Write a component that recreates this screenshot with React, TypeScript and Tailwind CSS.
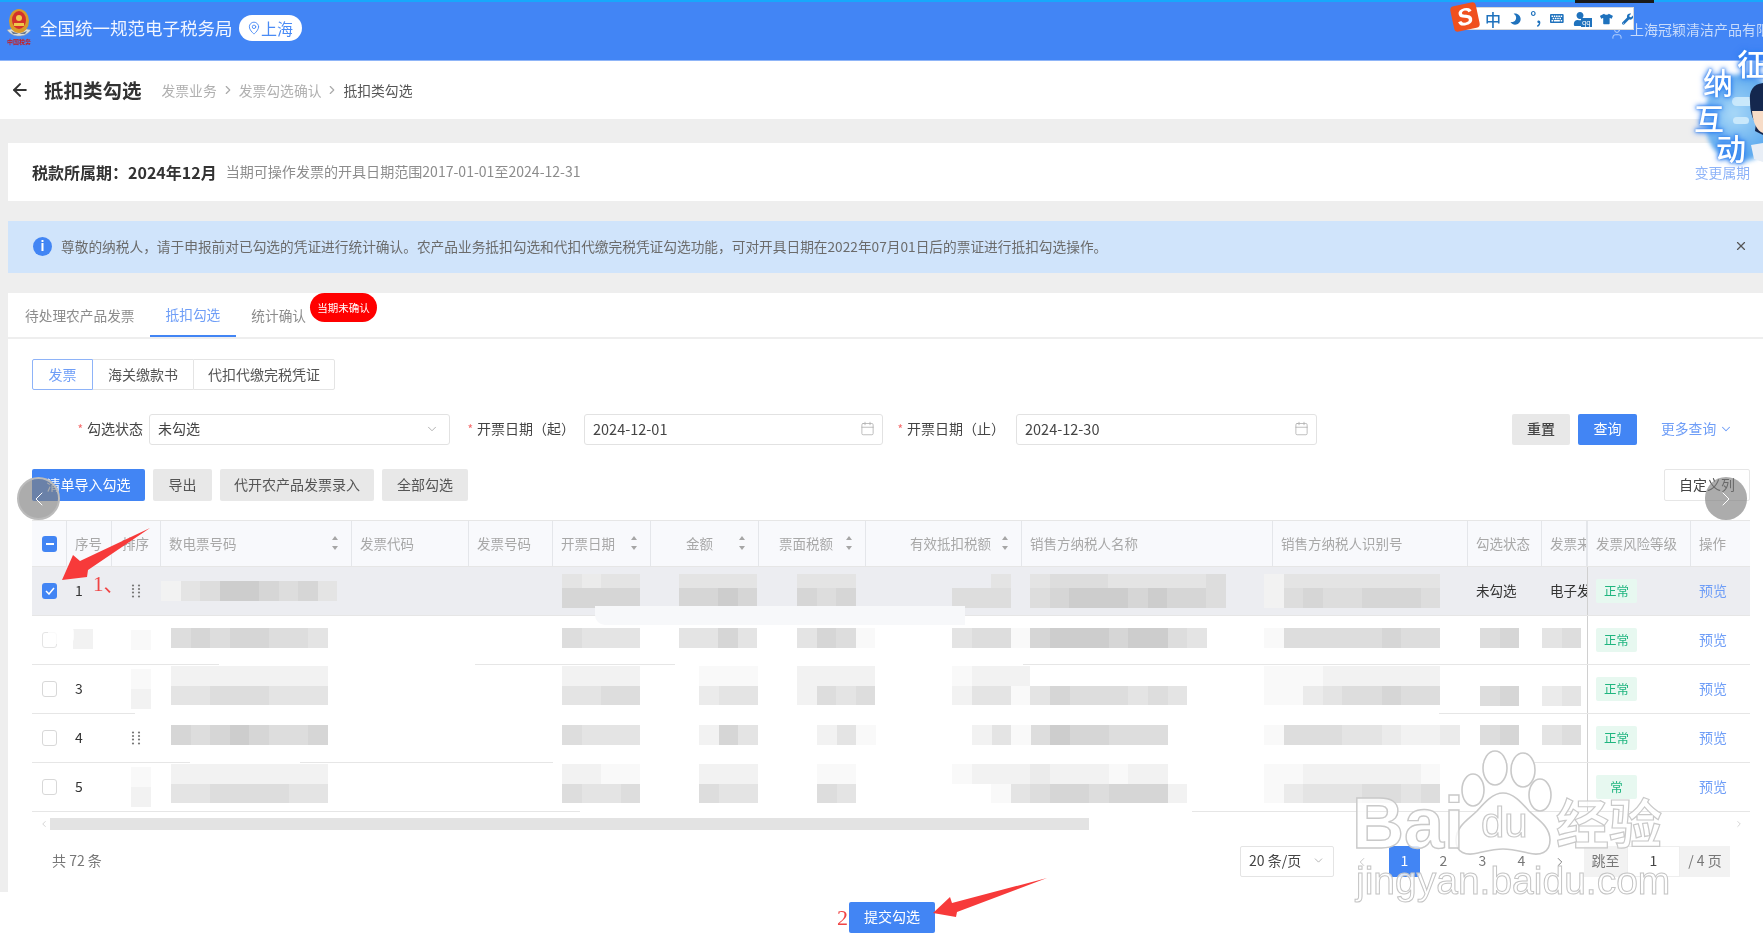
import React from "react";
import { ArrowLeft, ChevronRight, ChevronLeft, ChevronDown, Calendar, X, MapPin, User } from "lucide-react";
import { FaMoon, FaKeyboard, FaUser, FaTshirt, FaWrench } from "react-icons/fa";

const S: Record<string, string> = {
  ".": "bg-transparent",
  a: "bg-[#f9f9f9]",
  b: "bg-[#f2f2f2]",
  c: "bg-[#ebebeb]",
  d: "bg-[#e4e4e4]",
  e: "bg-[#dddddd]",
  f: "bg-[#d6d6d6]",
  g: "bg-[#cdcdcd]",
  h: "bg-[#c2c2c2]",
};

function Mosaic({ rows, cls, shortTop }: { rows: string[]; cls: string; shortTop?: boolean }) {
  return (
    <div className={"flex flex-col " + cls}>
      {rows.map((r, i) => (
        <div key={i} className={"flex " + (shortTop && i === 0 && rows.length > 1 ? "h-[14px]" : "h-[19.6px]")}>
          {r.split("").map((c, j) => (
            <div key={j} className={"w-[19.6px] h-full shrink-0 " + S[c]} />
          ))}
        </div>
      ))}
    </div>
  );
}

function Sort() {
  return (
    <svg width="8" height="16" viewBox="0 0 8 16" className="shrink-0">
      <path d="M4 1L7 5H1z" fill="#a6a6a6" />
      <path d="M4 15L7 11H1z" fill="#a6a6a6" />
    </svg>
  );
}

function Grip() {
  return (
    <svg width="10" height="15" viewBox="0 0 10 15">
      {[1.5, 5, 8.5, 12.5].map((y) => (
        <g key={y}>
          <circle cx="2" cy={y} r="1.1" fill="#777" />
          <circle cx="8" cy={y} r="1.1" fill="#777" />
        </g>
      ))}
    </svg>
  );
}

const COLS = "grid grid-cols-[35px_45px_49px_191px_117px_84px_98px_108px_107px_156px_251px_195px_74px_45px_104px_59px]";

function Head({ children, cls, sort, sortCls }: { children?: React.ReactNode; cls?: string; sort?: boolean; sortCls?: string }) {
  return (
    <div className={"flex items-center h-full pb-[1px] border-r border-[#e4e6ea] text-[13.5px] text-[#a8a8a8] " + (cls || "pl-2")}>
      <span className="whitespace-nowrap overflow-hidden">{children}</span>
      {sort && <span className={"flex " + (sortCls || "")}><Sort /></span>}
    </div>
  );
}

function Tag({ label = "正常" }: { label?: string }) {
  return (
    <div className="h-full flex items-center pl-2 border-l border-[#d0d0d0]">
      <span className="w-[41px] h-[24px] bg-[#e7f8f0] rounded-[2px] flex items-center justify-center text-[12.5px] text-[#1fb57f]">{label}</span>
    </div>
  );
}

function Box({ checked, faded }: { checked?: boolean; faded?: boolean }) {
  return (
    <div className="h-full flex items-center pl-[10px]">
      {checked ? (
        <span className="w-[15px] h-[16px] rounded-[3px] bg-[#4285f4] flex items-center justify-center">
          <svg width="10" height="8" viewBox="0 0 10 8"><path d="M1 4l3 3 5-6" fill="none" stroke="#fff" strokeWidth="1.5" /></svg>
        </span>
      ) : (
        <span className={"w-[15px] h-[16px] rounded-[3px] border " + (faded ? "border-[#e4e4e4] bg-white" : "border-[#d8d8d8] bg-white")} />
      )}
    </div>
  );
}

function Row({
  sel, checked, num, grip, seq, handleM, m1, m2, m3, m4, m5, m6, m7, m8, m9, tag, tagFaded,
}: {
  sel?: boolean; checked?: boolean; num?: string; grip?: boolean; seq?: React.ReactNode; handleM?: React.ReactNode;
  m1?: React.ReactNode; m2?: React.ReactNode; m3?: React.ReactNode; m4?: React.ReactNode; m5?: React.ReactNode;
  m6?: React.ReactNode; m7?: React.ReactNode; m8?: React.ReactNode; m9?: React.ReactNode; tag?: string; tagFaded?: boolean;
}) {
  return (
    <div className={COLS + " h-[49px] border-b border-[#e6e6e6] " + (sel ? "bg-[#ecedf1]" : "bg-white")}>
      <Box checked={checked} faded={tagFaded} />
      <div className="h-full flex items-center pb-[2px] pl-2 text-[14px] text-[#333] relative">
        {seq}
        {num}
      </div>
      <div className="h-full flex items-center pl-[19px]">
        {handleM}
        {grip && <Grip />}
      </div>
      <div>{m1}</div>
      <div />
      <div />
      <div>{m2}</div>
      <div>{m3}</div>
      <div>{m4}</div>
      <div>{m5}</div>
      <div>{m6}</div>
      <div>{m7}</div>
      <div>{m8}</div>
      <div className="overflow-hidden">{m9}</div>
      <Tag label={tag} />
      <div className="h-full flex items-center pb-[2px] pl-2 text-[14px] text-[#6f9ef7]">预览</div>
    </div>
  );
}

function Field({ label, cls }: { label: string; cls: string }) {
  return (
    <div className={"flex items-center justify-end pb-[2px] whitespace-nowrap text-[14px] text-[#444] " + cls}>
      <span className="text-[#f56c6c] mr-1 text-[12px]">*</span>
      {label}
    </div>
  );
}

function DateInput({ value, cls }: { value: string; cls: string }) {
  return (
    <div className={"h-[31px] pb-[2px] border border-[#e2e2e2] rounded-[3px] flex items-center justify-between pl-2 pr-[7px] text-[14.5px] text-[#444] " + cls}>
      {value}
      <Calendar size={15} strokeWidth={1.2} className="text-[#aaa]" />
    </div>
  );
}

function GrayBtn({ children, cls }: { children: React.ReactNode; cls: string }) {
  return <button className={"h-[32px] pb-[2px] bg-[#e8e8e8] rounded-[2px] text-[14px] text-[#555] flex items-center justify-center " + cls}>{children}</button>;
}

function Emblem() {
  return (
    <div className="flex flex-col items-center w-[26px] ml-[6px] mt-[6px] self-start">
      <svg width="26" height="30" viewBox="0 0 26 30">
        <path d="M1 22c4 5 8 6 12 6s8-1 12-6l-4-1H5z" fill="#d8dde2" stroke="#8f97a3" strokeWidth="0.6" />
        <ellipse cx="13" cy="13" rx="10" ry="12" fill="#d99a2b" />
        <ellipse cx="13" cy="12" rx="7" ry="9" fill="#d4302a" />
        <circle cx="13" cy="10" r="3" fill="#efc94c" />
        <rect x="8" y="15" width="10" height="3" fill="#efc94c" />
        <path d="M5 23l8 3 8-3-2 3h-12z" fill="#6b7a8f" />
      </svg>
      <span className="text-[6px] leading-[8px] font-bold text-[#c81e1e] whitespace-nowrap">中国税务</span>
    </div>
  );
}

const tabBase = "h-full flex items-center whitespace-nowrap text-[13.7px]";

export default function App() {
  return (
    <div className="relative w-[1763px] h-[939px] overflow-hidden bg-white [font-family:'Noto_Sans_CJK_SC','Noto_Sans',sans-serif] blur-[0.4px]">
      <div className="h-[2px] bg-[#17a8fb]" />
      {/* header */}
      <header className="h-[59px] pb-[6px] bg-[#4285f5] flex items-center border-b border-[#8fb5f8]">
        <Emblem />
        <span className="ml-2 text-[17.5px] text-[#f2f6ff] whitespace-nowrap">全国统一规范电子税务局</span>
        <span className="ml-[6px] w-[63px] h-[26px] bg-white rounded-full flex items-center justify-center text-[16px] text-[#4a8bf5]">
          <MapPin size={14} strokeWidth={1.6} />
          上海
        </span>
        <span className="ml-auto mt-[3px] flex items-center text-[14px] text-[#c8dbfb] whitespace-nowrap w-[153px] overflow-hidden">
          <User size={14} strokeWidth={1.5} className="shrink-0 mr-[6px] mt-[6px]" />
          上海冠颖清洁产品有限
        </span>
      </header>
      {/* breadcrumb */}
      <div className="h-[58px] flex items-center">
        <ArrowLeft size={20} strokeWidth={2.4} className="ml-[10px] text-[#333]" />
        <span className="ml-[14px] text-[19.5px] font-bold text-[#333] whitespace-nowrap">抵扣类勾选</span>
        <span className="ml-5 text-[13.8px] text-[#b0b0b0] whitespace-nowrap">发票业务</span>
        <ChevronRight size={14} className="mx-[4px] text-[#aaa]" />
        <span className="text-[13.8px] text-[#b0b0b0] whitespace-nowrap">发票勾选确认</span>
        <ChevronRight size={14} className="mx-[4px] text-[#aaa]" />
        <span className="text-[13.8px] text-[#555] whitespace-nowrap">抵扣类勾选</span>
      </div>
      {/* main */}
      <main className="h-[773px] bg-[#eeeeee] pl-2 pt-6">
        <section className="h-[58px] bg-white flex items-center pl-6 pr-[13px]">
          <span className="text-[16px] font-bold text-[#333] whitespace-nowrap">税款所属期：2024年12月</span>
          <span className="ml-[9px] text-[14.05px] text-[#8c8c8c] whitespace-nowrap">当期可操作发票的开具日期范围2017-01-01至2024-12-31</span>
          <span className="ml-auto text-[13.8px] text-[#8eb3f8] whitespace-nowrap">变更属期</span>
        </section>
        <section className="mt-5 h-[52px] pb-[2px] bg-[#d0e4fb] flex items-center pl-[25px] pr-[15px]">
          <span className="w-[19px] h-[19px] rounded-full bg-[#4285f4] flex items-center justify-center text-[13px] font-bold text-white shrink-0">i</span>
          <span className="ml-[9px] text-[13.7px] text-[#6b6b6b] whitespace-nowrap">尊敬的纳税人，请于申报前对已勾选的凭证进行统计确认。农产品业务抵扣勾选和代扣代缴完税凭证勾选功能，可对开具日期在2022年07月01日后的票证进行抵扣勾选操作。</span>
          <X size={14} strokeWidth={2} className="ml-auto text-[#555]" />
        </section>
        <section className="mt-5 h-[599px] bg-white">
          {/* tabs */}
          <div className="h-[46px] border-b-2 border-[#eeeeee] flex items-stretch">
            <span className={tabBase + " ml-[17px] text-[#8c8c8c]"}>待处理农产品发票</span>
            <span className={tabBase + " ml-[15px] px-4 text-[#6f9ef7] border-b-2 border-[#4285f4] h-[46px]"}>抵扣勾选</span>
            <span className={tabBase + " ml-[15px] text-[#8c8c8c]"}>统计确认</span>
            <span className="ml-1 h-[29px] w-[67px] rounded-full bg-[#ff0000] text-white text-[10.5px] flex items-center justify-center whitespace-nowrap">当期未确认</span>
          </div>
          {/* segmented */}
          <div className="mt-5 ml-6 h-[31px] flex text-[14px]">
            <span className="w-[61px] flex items-center justify-center border border-[#8eb3f8] rounded-l-[2px] text-[#6f9ef7]">发票</span>
            <span className="w-[100px] flex items-center justify-center border-y border-[#e4e4e4] text-[#555]">海关缴款书</span>
            <span className="w-[142px] flex items-center justify-center border border-[#e4e4e4] rounded-r-[2px] text-[#555]">代扣代缴完税凭证</span>
          </div>
          {/* filters */}
          <div className="mt-6 ml-6 h-[31px] flex items-stretch">
            <Field label="勾选状态" cls="w-[111px]" />
            <div className="ml-[6px] w-[301px] pb-[2px] border border-[#e2e2e2] rounded-[3px] flex items-center justify-between pl-2 pr-[10px] text-[14px] text-[#444]">
              未勾选
              <ChevronDown size={14} strokeWidth={1.3} className="text-[#999]" />
            </div>
            <Field label="开票日期（起）" cls="w-[125px]" />
            <div className="ml-[9px]"><DateInput value="2024-12-01" cls="w-[299px]" /></div>
            <Field label="开票日期（止）" cls="w-[122px]" />
            <div className="ml-[11px]"><DateInput value="2024-12-30" cls="w-[301px]" /></div>
            <button className="ml-[195px] w-[58px] pb-[2px] bg-[#e8e8e8] rounded-[2px] text-[14px] font-medium text-[#444]">重置</button>
            <button className="ml-2 w-[59px] pb-[2px] bg-[#4285f4] rounded-[2px] text-[14px] text-white">查询</button>
            <span className="ml-[24px] pb-[2px] flex items-center text-[13.8px] text-[#6f9ef7] whitespace-nowrap">
              更多查询
              <ChevronDown size={14} strokeWidth={1.8} className="ml-[3px]" />
            </span>
          </div>
          {/* actions */}
          <div className="mt-6 ml-6 h-[32px] flex items-stretch gap-2 w-[1718px]">
            <button className="w-[113px] pb-[2px] bg-[#4285f4] rounded-[2px] text-[14px] text-white">清单导入勾选</button>
            <GrayBtn cls="w-[59px]">导出</GrayBtn>
            <GrayBtn cls="w-[154px]">代开农产品发票录入</GrayBtn>
            <GrayBtn cls="w-[86px]">全部勾选</GrayBtn>
            <button className="ml-auto w-[86px] pb-[2px] border border-[#e6e6e6] rounded-[2px] text-[14px] text-[#444]">自定义列</button>
          </div>
          {/* table */}
          <div className="mt-[19px] ml-6 w-[1718px]">
            <div className={COLS + " h-[47px] bg-[#f8f9fc] border-y border-[#e6e6e6]"}>
              <div className="h-full flex items-center pl-[10px] border-r border-[#e4e6ea]">
                <span className="w-[15px] h-[16px] rounded-[3px] bg-[#4285f4] flex items-center justify-center">
                  <span className="w-[8px] h-[2px] bg-white" />
                </span>
              </div>
              <Head>序号</Head>
              <Head cls="pl-[10px]">排序</Head>
              <Head cls="pl-2 justify-between pr-3" sort>数电票号码</Head>
              <Head>发票代码</Head>
              <Head>发票号码</Head>
              <Head cls="pl-2 justify-between pr-3" sort>开票日期</Head>
              <Head cls="justify-end pr-3" sort sortCls="ml-[25px]">金额</Head>
              <Head cls="justify-end pr-3" sort sortCls="ml-[12px]">票面税额</Head>
              <Head cls="justify-end pr-3" sort sortCls="ml-[10px]">有效抵扣税额</Head>
              <Head>销售方纳税人名称</Head>
              <Head>销售方纳税人识别号</Head>
              <Head>勾选状态</Head>
              <Head>发票来源</Head>
              <Head cls="pl-2 border-l border-[#d0d0d0]">发票风险等级</Head>
              <Head cls="pl-2 border-r-0">操作</Head>
            </div>
            <Row
              sel checked num="1" grip
              m1={<Mosaic cls="mt-[14px]" rows={["bdeggfefd"]} />}
              m2={<Mosaic shortTop cls="ml-[9px] mt-[7px]" rows={["dcdd", "ffff"]} />}
              m3={<Mosaic shortTop cls="ml-[28px] mt-[7px]" rows={["dddd", "ffgf"]} />}
              m4={<Mosaic shortTop cls="ml-[38px] mt-[7px]" rows={["ddd", "fef"]} />}
              m5={<Mosaic shortTop cls="ml-[86px] mt-[7px]" rows={["..d", "eee"]} />}
              m6={<Mosaic shortTop cls="ml-[8px] mt-[7px]" rows={["deeeddddde", "efgggfgffe"]} />}
              m7={<Mosaic shortTop cls="ml-[-9px] mt-[7px]" rows={["bdddddddd", "befeefffe"]} />}
              m8={<div className="h-full flex items-center pb-[2px] pl-2 text-[13.5px] text-[#333]">未勾选</div>}
              m9={<div className="h-full flex items-center pb-[2px] pl-2 text-[13.5px] text-[#333] whitespace-nowrap">电子发票</div>}
            />
            <Row
              tagFaded tag="正常"
              seq={<Mosaic cls="ml-[-2px]" rows={["b"]} />}
              handleM={<Mosaic cls="" rows={["a"]} />}
              m1={<Mosaic cls="ml-[10px] mt-[12px]" rows={["efeffeed"]} />}
              m2={<Mosaic cls="ml-[9px] mt-[12px]" rows={["eddd"]} />}
              m3={<Mosaic cls="ml-[28px] mt-[12px]" rows={["ddfd"]} />}
              m4={<Mosaic cls="ml-[38px] mt-[12px]" rows={["dfea"]} />}
              m5={<Mosaic cls="ml-[86px] mt-[12px]" rows={["deeafgggfgged"]} />}
              m7={<Mosaic cls="ml-[-9px] mt-[12px]" rows={["aeeeeefee"]} />}
              m8={<Mosaic cls="ml-[12px] mt-[12px]" rows={["ef"]} />}
              m9={<Mosaic cls="mt-[12px]" rows={["de"]} />}
            />
            <Row
              num="3"
              handleM={<Mosaic rows={["a", "b"]} cls="" />}
              m1={<Mosaic cls="ml-[10px] mt-[1px]" rows={["bbbbbbbb", "ddeeeddd"]} />}
              m2={<Mosaic cls="ml-[9px] mt-[1px]" rows={["bbbb", "ddee"]} />}
              m3={<Mosaic cls="ml-[48px] mt-[1px]" rows={["aaa", "cdd"]} />}
              m4={<Mosaic cls="ml-[38px] mt-[1px]" rows={["bbbb", "bede"]} />}
              m5={<Mosaic cls="ml-[86px] mt-[1px]" rows={["abbb", "bddadfeeeded"]} />}
              m7={<Mosaic cls="ml-[-9px] mt-[1px]" rows={["aaabbbbbb", "aacdeefee"]} />}
              m8={<Mosaic cls="ml-[12px] mt-[21px]" rows={["ef"]} />}
              m9={<Mosaic cls="mt-[21px]" rows={["cd"]} />}
            />
            <Row
              num="4" grip
              m1={<Mosaic cls="ml-[10px] mt-[11px]" rows={["fefgfeef"]} />}
              m2={<Mosaic cls="ml-[9px] mt-[11px]" rows={["eddd"]} />}
              m3={<Mosaic cls="ml-[48px] mt-[11px]" rows={["bfd"]} />}
              m4={<Mosaic cls="ml-[58px] mt-[11px]" rows={["bda"]} />}
              m5={<Mosaic cls="ml-[106px] mt-[11px]" rows={["bdaegffeee"]} />}
              m7={<Mosaic cls="ml-[-9px] mt-[11px]" rows={["aeeeddcbbc"]} />}
              m8={<Mosaic cls="ml-[12px] mt-[11px]" rows={["ef"]} />}
              m9={<Mosaic cls="mt-[11px]" rows={["de"]} />}
            />
            <Row
              num="5" tag="常"
              handleM={<Mosaic rows={["a", "b"]} cls="" />}
              m1={<Mosaic cls="ml-[10px] mt-[1px]" rows={["bbbbbbbb", "ddeeeedd"]} />}
              m2={<Mosaic cls="ml-[9px] mt-[1px]" rows={["bbaa", "edde"]} />}
              m3={<Mosaic cls="ml-[48px] mt-[1px]" rows={["bbb", "edd"]} />}
              m4={<Mosaic cls="ml-[58px] mt-[1px]" rows={["aa", "ed"]} />}
              m5={<Mosaic cls="ml-[86px] mt-[1px]" rows={["abbbcbbbabb", "..adeffefffb"]} />}
              m7={<Mosaic cls="ml-[-9px] mt-[1px]" rows={["aabbbbbba", "acdddeede"]} />}
              m8={<Mosaic cls="ml-[12px] mt-[21px]" rows={[".."]} />}
            />
            {/* scrollbar */}
            <div className="h-[19px] flex items-center pl-[7px] pr-[6px] text-[#ccc]">
              <ChevronLeft size={10} className="mt-[4px]" />
              <div className="ml-[1px] mt-[4px] w-[1039px] h-[12px] bg-[#e3e3e3]" />
              <ChevronRight size={10} className="ml-auto mt-[4px]" />
            </div>
          </div>
          {/* pagination */}
          <div className="mt-[15px] ml-6 w-[1718px] h-[31px] flex items-center text-[14px]">
            <span className="ml-5 pb-[2px] text-[#777]">共 72 条</span>
            <span className="ml-auto w-[94px] h-full pb-[2px] border border-[#e4e4e4] rounded-[2px] flex items-center justify-between pl-2 pr-2 text-[#444]">
              20 条/页
              <ChevronDown size={13} strokeWidth={1.3} className="text-[#999]" />
            </span>
            <ChevronLeft size={14} strokeWidth={1.4} className="ml-[21px] text-[#bbb]" />
            <span className="ml-[20px] w-[31px] h-full pb-[2px] rounded-[3px] bg-[#4285f4] text-white flex items-center justify-center">1</span>
            <span className="ml-2 w-[31px] pb-[2px] text-center text-[#777]">2</span>
            <span className="ml-2 w-[31px] pb-[2px] text-center text-[#777]">3</span>
            <span className="ml-2 w-[31px] pb-[2px] text-center text-[#777]">4</span>
            <ChevronRight size={14} strokeWidth={1.4} className="ml-[16px] text-[#666]" />
            <span className="ml-[17px] w-[43px] h-full pb-[2px] bg-[#f2f2f2] flex items-center justify-center text-[#777] whitespace-nowrap">跳至</span>
            <span className="w-[53px] h-full pb-[2px] flex items-center justify-center border border-[#eeeeee] text-[#444]">1</span>
            <span className="w-[50px] h-full pb-[2px] bg-[#f2f2f2] flex items-center justify-center text-[#777] whitespace-nowrap mr-5">/ 4 页</span>
          </div>
        </section>
      </main>
      {/* bottom */}
      <div className="h-[47px] pt-[10px] pl-[849px]">
        <button className="w-[86px] h-[31px] pb-[2px] bg-[#4285f4] rounded-[2px] text-[14px] text-white">提交勾选</button>
      </div>

      {/* white smears over table lines */}
      <div className="absolute left-[219px] top-[660px] w-[256px] h-[5px] bg-white" />
      <div className="absolute left-[675px] top-[660px] w-[348px] h-[5px] bg-white" />
      <div className="absolute left-[135px] top-[709px] w-[1304px] h-[5px] bg-white" />
      <div className="absolute left-[190px] top-[758px] w-[110px] h-[5px] bg-white" />
      <div className="absolute left-[553px] top-[758px] w-[981px] h-[5px] bg-white" />
      <div className="absolute left-[580px] top-[807px] w-[612px] h-[5px] bg-white" />
      <div className="absolute left-[595px] top-[606px] w-[370px] h-[19px] bg-[#f7f8fa] rounded-bl-[10px]" />
      <div className="absolute left-[48px] top-[626px] w-[26px] h-[18px] bg-white/80 rounded-[6px]" />

      {/* nav circles */}
      <div className="absolute left-[17px] top-[477px] w-[43px] h-[43px] rounded-full bg-[#7f7f7f]/65 border-2 border-[#bbbbbb] flex items-center justify-center">
        <ChevronLeft size={24} strokeWidth={1} className="text-white" />
      </div>
      <div className="absolute left-[1705px] top-[477px] w-[42px] h-[43px] rounded-full bg-[#7f7f7f]/65 flex items-center justify-center">
        <ChevronRight size={24} strokeWidth={1} className="text-white" />
      </div>

      {/* annotations */}
      <svg className="absolute left-0 top-0" width="1763" height="939" viewBox="0 0 1763 939">
        <polygon points="150,528 80,561 73,555 62,580 87,577 88,570" fill="#f73a3a" />
        <polygon points="1047,878 952,903 950,897 933,913 956,917 957,912" fill="#f73a3a" />
      </svg>
      <span className="absolute left-[93px] top-[569px] text-[21px] leading-[30px] text-[#f04545] [font-family:'Liberation_Serif','Noto_Sans_CJK_SC',serif] whitespace-nowrap">1、</span>
      <span className="absolute left-[837px] top-[903px] text-[22px] leading-[30px] text-[#f04545] [font-family:'Liberation_Serif',serif]">2</span>

      {/* top-bar black strip */}
      <div className="absolute left-[1575px] top-0 w-[79px] h-[3px] bg-[#1a1a1a]" />

      {/* IME bar */}
      <div className="absolute left-[1464px] top-[7px] w-[170px] h-[23px] bg-white border border-[#d8d8d8] flex items-center pl-[20px] gap-[9px] text-[#1f72bd]">
        <span className="text-[16px] font-medium leading-none">中</span>
        <FaMoon size={14} className="-scale-x-100" />
        <span className="text-[15px] font-bold leading-none whitespace-nowrap mb-[4px]">°,</span>
        <FaKeyboard size={17} />
        <span className="relative flex">
          <FaUser size={14} />
          <span className="absolute left-[8px] top-[6px] w-[11px] h-[9px] bg-[#1f72bd] text-white text-[7px] leading-[8px] text-center">qq</span>
        </span>
        <FaTshirt size={16} className="ml-[4px]" />
        <FaWrench size={14} />
      </div>
      <div className="absolute left-[1452px] top-[4px] w-[26px] h-[26px] rounded-[4px] -rotate-12 bg-[#f0501e] flex items-center justify-center text-[24px] font-bold italic text-white leading-none [font-family:'Liberation_Sans',sans-serif]">S</div>

      {/* mascot */}
      <div className="absolute left-[1706px] top-[74px] w-[70px] h-[88px] rounded-[36px] bg-[radial-gradient(circle_at_40%_45%,#a8d8f8,#5aa8ee_70%,#5aa8ee00_100%)] blur-[2px]" />
      <div className="absolute left-[1732px] top-[97px] w-[24px] h-[9px] rounded-full bg-[#c9e8fb]" />
      <div className="absolute left-[1733px] top-[117px] w-[16px] h-[7px] rounded-full bg-[#c9e8fb]" />
      <svg className="absolute left-[1745px] top-[83px]" width="18" height="80" viewBox="0 0 18 80">
        <path d="M18 0C8 1 4 8 5 18c0 10 2 18 6 22l-1 8 8 4z" fill="#14274e" />
        <path d="M7 28c1 12 5 20 11 22V28z" fill="#f7dcc7" />
        <path d="M6 62l3 14 9 3V60z" fill="#e8eef6" />
      </svg>
      {[
        ["征", "left-[1737px] top-[44px]"],
        ["纳", "left-[1703px] top-[63px]"],
        ["互", "left-[1694px] top-[99px]"],
        ["动", "left-[1716px] top-[129px]"],
      ].map(([t, c]) => (
        <span key={t} className={"absolute text-[30px] leading-[36px] font-medium text-white [text-shadow:0_0_4px_#2f7ff0,0_0_2px_#2f7ff0,0_0_6px_#2f7ff0] " + c}>{t}</span>
      ))}

      {/* watermark */}
      <svg className="absolute left-[1340px] top-[745px]" width="340" height="160" viewBox="0 0 340 160" fill="none" stroke="#c9c9c9" strokeWidth="1.6">
        <ellipse cx="155" cy="23" rx="12" ry="17" fill="#ffffffb0" />
        <ellipse cx="183" cy="25" rx="12" ry="17" fill="#ffffffb0" />
        <ellipse cx="133" cy="45" rx="11" ry="16" fill="#ffffffb0" />
        <ellipse cx="200" cy="50" rx="11" ry="16" fill="#ffffffb0" />
        <path d="M163 48c10 0 18 9 26 18 8 8 21 15 21 29 0 13-10 16-22 13-9-2-16-4-25-4-9 0-16 2-25 4-12 3-22 0-22-13 0-14 13-21 21-29 8-9 16-18 26-18z" fill="#ffffffd0" />
      </svg>
      <span className="absolute left-[1352px] top-[783px] text-[72px] leading-[80px] font-bold text-white/80 [-webkit-text-stroke:1.4px_#c9c9c9] [font-family:'Liberation_Sans',sans-serif]">Bai</span>
      <span className="absolute left-[1481px] top-[798px] text-[42px] leading-[50px] text-white/80 [-webkit-text-stroke:1.2px_#c9c9c9] [font-family:'Liberation_Sans',sans-serif]">du</span>
      <span className="absolute left-[1556px] top-[786px] text-[53px] leading-[70px] font-bold text-white/80 [-webkit-text-stroke:1.2px_#c9c9c9] whitespace-nowrap">经验</span>
      <span className="absolute left-[1356px] top-[858px] text-[39px] leading-[46px] text-white/80 [-webkit-text-stroke:1px_#c4c4c4] [font-family:'Liberation_Sans',sans-serif] whitespace-nowrap">jingyan.baidu.com</span>
    </div>
  );
}
